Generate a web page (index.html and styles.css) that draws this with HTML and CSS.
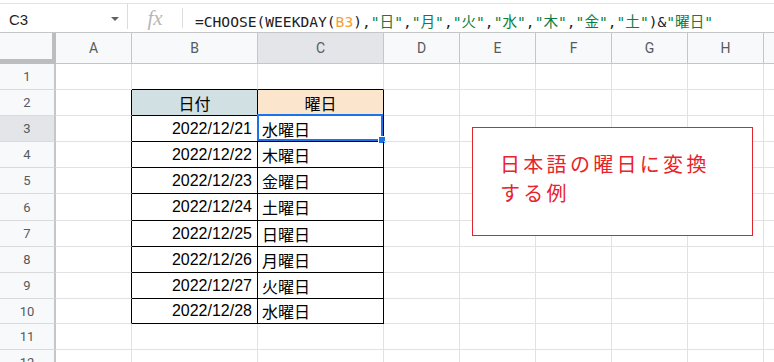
FILE: index.html
```html
<!DOCTYPE html>
<html lang="ja">
  <head>
    <meta charset="UTF-8" />
    <meta name="viewport" content="width=device-width, initial-scale=1.0" />
    <title>曜日に変換</title>
    <link rel="stylesheet" href="styles.css">
  </head>
  <body>
    <div class="formula-bar">
      <div class="name-box">
        <span>C3</span>
        <span class="caret"></span>
      </div>
      <div class="sep sep-long"></div>
      <div class="fx">fx</div>
      <div class="sep"></div>
      <div class="formula">=CHOOSE(WEEKDAY(<span class="ref">B3</span>),<span class="str">"日"</span>,<span class="str">"月"</span>,<span class="str">"火"</span>,<span class="str">"水"</span>,<span class="str">"木"</span>,<span class="str">"金"</span>,<span class="str">"土"</span>)&amp;<span class="str">"曜日"</span></div>
    </div>

    <div class="sheet" id="sheet"></div>

    <div class="textbox">日本語の曜日に変換<br>する例</div>

    <script>
      const cols = ["A", "B", "C", "D", "E", "F", "G", "H", "I"];
      const days = ["水", "木", "金", "土", "日", "月", "火", "水"];

      const sheet = document.querySelector("#sheet");
      let html = '<div class="corner"></div>';

      // Cabecera de columnas (la I queda fuera de la vista)
      cols.forEach((c) => {
        html += `<div class="col-head${c === "C" ? " sel" : ""}">${c === "I" ? "" : c}</div>`;
      });

      for (let r = 1; r <= 12; r++) {
        html += `<div class="row-head${r === 3 ? " sel" : ""}">${r}</div>`;
        cols.forEach((c) => {
          let cls = "cell";
          let text = "";
          const inTable = r >= 2 && r <= 10;

          if (c === "A" && inTable) cls += " line-r";
          if ((c === "B" || c === "C") && r === 1) cls += " line-b";
          if ((c === "B" || c === "C") && inTable) cls += " line-r line-b";

          if (r === 2 && c === "B") { cls += " head-date"; text = "日付"; }
          if (r === 2 && c === "C") { cls += " head-day"; text = "曜日"; }
          if (r >= 3 && inTable && c === "B") {
            cls += " date";
            text = `2022/12/${18 + r}`;
          }
          if (r >= 3 && inTable && c === "C") {
            text = `${days[r - 3]}曜日`;
          }
          if (r === 3 && c === "C") {
            text += '<span class="selection"><span class="handle"></span></span>';
          }
          html += `<div class="${cls}">${text}</div>`;
        });
      }

      sheet.innerHTML = html;
    </script>
  </body>
</html>
```

FILE: styles.css
```css
body {
  margin: 0;
  width: 774px;
  height: 362px;
  overflow: hidden;
  position: relative;
  background-color: #fff;
  font-family: "Liberation Sans", "Noto Sans CJK JP", sans-serif;
}

/* barra de fórmulas */
.formula-bar {
  display: flex;
  align-items: center;
  height: 28px;
  margin-top: 3px;
  border-top: 1px solid #e3e3e3;
  border-bottom: 1px solid #c4c7c5;
}

.name-box {
  width: 127px;
  box-sizing: border-box;
  display: flex;
  align-items: center;
  justify-content: space-between;
  padding: 2px 8px 0 9px;
  font-size: 15px;
  color: #1f1f1f;
}

.caret {
  width: 0;
  height: 0;
  border-left: 4px solid transparent;
  border-right: 4px solid transparent;
  border-top: 4px solid #5f6368;
}

.sep {
  width: 1px;
  height: 20px;
  background-color: #dadce0;
}

.sep-long {
  align-self: flex-start;
  height: 25px;
}

.fx {
  width: 54px;
  text-align: center;
  font-family: "Liberation Serif", serif;
  font-style: italic;
  font-size: 21px;
  color: #b7b7b7;
}

.formula {
  padding: 4px 0 0 12px;
  font-family: "DejaVu Sans Mono", "Noto Sans CJK JP", monospace;
  font-size: 14.6px;
  white-space: nowrap;
  color: #202124;
}

.formula .ref {
  color: #f4a032;
}

.formula .str {
  color: #0b8043;
}

/* hoja */
.sheet {
  display: grid;
  grid-template-columns: 56px 76px 126px 126px repeat(6, 76px);
  grid-template-rows: 31px repeat(5, 26px) 27px repeat(3, 26px) 25px 26px 26px;
}

.corner {
  background-color: #f8f9fa;
  border-right: 4px solid #bdbdbd;
  border-bottom: 5px solid #bdbdbd;
}

.col-head,
.row-head {
  display: flex;
  align-items: center;
  justify-content: center;
  background-color: #f8f9fa;
  border-right: 1px solid #c4c7c5;
  border-bottom: 1px solid #c4c7c5;
  font-family: Roboto, sans-serif;
  font-size: 14px;
  color: #575a5e;
}

.row-head {
  border-right: 2px solid #c4c7c5;
  border-bottom-color: #dadada;
  font-size: 13px;
}

.col-head.sel,
.row-head.sel {
  background-color: #e3e5e8;
}

.cell {
  position: relative;
  display: flex;
  align-items: center;
  padding: 0 4px;
  border-right: 1px solid #e2e2e2;
  border-bottom: 1px solid #e2e2e2;
  font-size: 16px;
  color: #000;
  white-space: nowrap;
}

.cell.line-r {
  border-right-color: #000;
}

.cell.line-b {
  border-bottom-color: #000;
}

.cell.date {
  justify-content: flex-end;
  padding-right: 5px;
}

.head-date,
.head-day {
  justify-content: center;
}

.head-date {
  background-color: #d0e0e3;
}

.head-day {
  background-color: #fce5cd;
}

.selection {
  position: absolute;
  top: -2px;
  left: -1px;
  right: 0;
  bottom: 0;
  border: 2px solid #1a73e8;
}

.handle {
  position: absolute;
  right: -5px;
  bottom: -5px;
  width: 6px;
  height: 6px;
  background-color: #1a73e8;
  border: 1px solid #fff;
}

/* cuadro de texto */
.textbox {
  position: absolute;
  left: 472px;
  top: 127px;
  width: 281px;
  height: 109px;
  box-sizing: border-box;
  padding: 21px 0 0 27px;
  border: 1px solid #e0262c;
  background-color: #fff;
  color: #e8232b;
  font-family: "Noto Sans CJK JP", sans-serif;
  font-size: 20px;
  letter-spacing: 3.3px;
  line-height: 29px;
  white-space: nowrap;
}
```
